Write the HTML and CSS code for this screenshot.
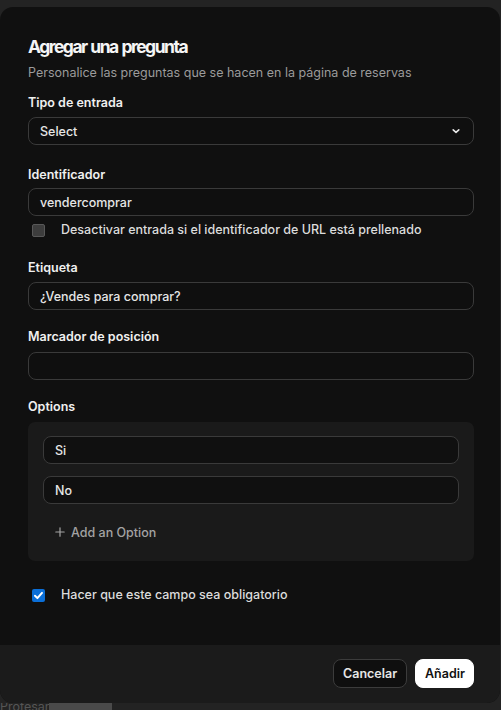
FILE: index.html
```html
<!DOCTYPE html>
<html lang="es">
<head>
<meta charset="utf-8">
<title>Agregar una pregunta</title>
<link rel="stylesheet" href="styles.css">
</head>
<body>
<div class="modal">
  <div class="content">
    <h1 class="title">Agregar una pregunta</h1>
    <p class="subtitle">Personalice las preguntas que se hacen en la página de reservas</p>

    <div class="field f-type">
      <label class="label">Tipo de entrada</label>
      <div class="input select">
        <span>Select</span>
        <svg class="chev" width="10" height="10" viewBox="0 0 10 10"><path d="M2.2 3.8 L5 6.4 L7.8 3.8" fill="none" stroke="#e8e8e8" stroke-width="1.6" stroke-linecap="round" stroke-linejoin="round"/></svg>
      </div>
    </div>

    <div class="field f-id">
      <label class="label">Identificador</label>
      <div class="input">vendercomprar</div>
      <div class="check-row">
        <span class="box"></span>
        <span>Desactivar entrada si el identificador de URL está prellenado</span>
      </div>
    </div>

    <div class="field f-label">
      <label class="label">Etiqueta</label>
      <div class="input">¿Vendes para comprar?</div>
    </div>

    <div class="field f-ph">
      <label class="label">Marcador de posición</label>
      <div class="input"></div>
    </div>

    <div class="field f-opt">
      <label class="label">Options</label>
      <div class="panel">
        <div class="input opt">Si</div>
        <div class="input opt">No</div>
        <div class="add">
          <svg width="10" height="10" viewBox="0 0 10 10"><path d="M5 0.8 V9.2 M0.8 5 H9.2" stroke="#a3a3a3" stroke-width="1.2" stroke-linecap="round"/></svg>
          <span>Add an Option</span>
        </div>
      </div>
    </div>

    <div class="check-row required">
      <span class="box checked">
        <svg width="13" height="13" viewBox="0 0 13 13"><path d="M3 6.8 L5.4 9.1 L10 3.9" fill="none" stroke="#fff" stroke-width="2" stroke-linecap="round" stroke-linejoin="round"/></svg>
      </span>
      <span>Hacer que este campo sea obligatorio</span>
    </div>
  </div>

  <div class="footer">
    <button class="btn cancel">Cancelar</button>
    <button class="btn add-btn">Añadir</button>
  </div>
</div>
<div class="under">
  <span class="under-text">Protesar</span>
  <span class="under-block"></span>
</div>
</body>
</html>
```

FILE: styles.css
```css
* { box-sizing: border-box; }
html, body { margin: 0; padding: 0; }
body {
  background: #232323;
  font-family: Inter, "Noto Sans", "Liberation Sans", sans-serif;
  color: #ececec;
  width: 501px;
  height: 710px;
  overflow: hidden;
  padding-top: 7px;
}
.modal {
  width: 500px;
  height: 696px;
  background: #101010;
  border-radius: 13px;
  overflow: hidden;
  display: flex;
  flex-direction: column;
}
.content {
  flex: 1;
  padding: 28px 26px 0 28px;
}
.title {
  margin: 0;
  font-size: 17.5px;
  line-height: 24px;
  font-weight: 700;
  letter-spacing: -1.5px;
  word-spacing: 1px;
  color: #f5f5f5;
}
.subtitle {
  margin: 4px 0 0;
  font-size: 12.5px;
  line-height: 20px;
  color: #9b9b9b;
}
.field { display: flex; flex-direction: column; }
.label {
  font-size: 12.5px;
  line-height: 16px;
  font-weight: 600;
  color: #f0f0f0;
  margin-bottom: 6px;
}
.f-type { margin-top: 12px; }
.f-id { margin-top: 22px; }
.f-id .label { margin-bottom: 5px; }
.f-label { margin-top: 22px; }
.f-ph { margin-top: 19px; }
.f-ph .label { margin-bottom: 7px; }
.f-opt { margin-top: 19px; }
.f-opt .label { margin-bottom: 7px; }
.input {
  height: 28px;
  border: 1px solid #3a3a3a;
  border-radius: 8px;
  background: #0f0f0f;
  padding: 0 11px;
  font-size: 12.5px;
  font-weight: 500;
  color: #e6e6e6;
  display: flex;
  align-items: center;
}
.select { justify-content: space-between; padding-right: 12px; }
.chev { display: block; }
.check-row {
  margin-top: 6px;
  display: flex;
  align-items: center;
  gap: 16px;
  padding-left: 4px;
  font-size: 12.5px;
  line-height: 16px;
  font-weight: 500;
  color: #dcdcdc;
}
.box {
  width: 13px;
  height: 13px;
  border-radius: 2px;
  background: #3d3d3d;
  border: 1px solid #585858;
  flex: none;
  display: flex;
  align-items: center;
  justify-content: center;
}
.box.checked {
  background: #0b6fd8;
  border: none;
}
.box svg { display: block; }
.panel {
  background: #1a1a1a;
  border-radius: 7px;
  padding: 14px 15px 15px;
  display: flex;
  flex-direction: column;
  gap: 12px;
}
.opt { background: #101010; }
.add {
  height: 28px;
  margin-top: 2px;
  display: flex;
  align-items: center;
  gap: 6px;
  padding-left: 12px;
  font-size: 12.5px;
  font-weight: 500;
  color: #a3a3a3;
}
.add svg { display: block; }
.required { margin-top: 26px; }
.footer {
  height: 58px;
  background: #1b1b1b;
  display: flex;
  justify-content: flex-end;
  align-items: flex-start;
  gap: 8px;
  padding: 14px 26px 0 0;
}
.btn {
  height: 29px;
  border-radius: 8px;
  font-family: inherit;
  font-size: 12.5px;
  font-weight: 600;
  padding: 0 9px;
  cursor: pointer;
}
.cancel {
  background: #0f0f0f;
  border: 1px solid #3c3c3c;
  color: #e6e6e6;
  width: 74px;
}
.add-btn {
  background: #ffffff;
  border: 1px solid #ffffff;
  color: #111;
  width: 59px;
}
.under {
  height: 7px;
  display: flex;
  align-items: flex-start;
  overflow: hidden;
}
.under-text {
  width: 49px;
  font-size: 12.5px;
  line-height: 7px;
  color: #555;
  overflow: hidden;
  white-space: nowrap;
}
.under-block {
  width: 63px;
  height: 7px;
  background: #4a4a4a;
}
```
